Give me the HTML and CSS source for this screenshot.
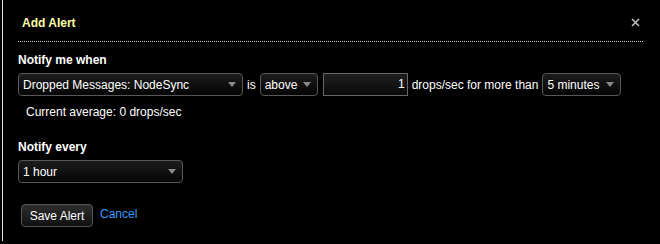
FILE: index.html
```html
<!DOCTYPE html>
<html>
<head>
    <link rel="stylesheet" href="styles.css">
</head>
<body>
    <div class="modal">
        <div class="modal-header">
            <h3 class="modal-title">Add Alert</h3>
            <span class="close">
                <svg width="9" height="9" viewBox="0 0 9 9"><path d="M1 1L8 8M8 1L1 8" stroke="#bbb" stroke-width="1.6"/></svg>
            </span>
        </div>
        <div class="modal-body">
            <div class="label">Notify me when</div>
            <div class="row">
                <div class="select select-metric">
                    <span>Dropped Messages: NodeSync</span>
                    <svg class="caret" width="8" height="5" viewBox="0 0 8 5"><path d="M0 0H8L4 5Z" fill="#8a8a8a"/></svg>
                </div>
                <span>is</span>
                <div class="select select-op">
                    <span>above</span>
                    <svg class="caret" width="8" height="5" viewBox="0 0 8 5"><path d="M0 0H8L4 5Z" fill="#8a8a8a"/></svg>
                </div>
                <div class="input">1</div>
                <span>drops/sec for more than</span>
                <div class="select select-time">
                    <span>5 minutes</span>
                    <svg class="caret" width="8" height="5" viewBox="0 0 8 5"><path d="M0 0H8L4 5Z" fill="#8a8a8a"/></svg>
                </div>
            </div>
            <div class="hint">Current average: 0 drops/sec</div>

            <div class="label label-every">Notify every</div>
            <div class="row">
                <div class="select select-every">
                    <span>1 hour</span>
                    <svg class="caret" width="8" height="5" viewBox="0 0 8 5"><path d="M0 0H8L4 5Z" fill="#8a8a8a"/></svg>
                </div>
            </div>

            <div class="actions">
                <button class="btn">Save Alert</button>
                <a class="cancel" href="#">Cancel</a>
            </div>
        </div>
    </div>
</body>
</html>
```

FILE: styles.css
```css
body {
    margin: 0;
    background-color: #000;
    color: #fff;
    font-family: "Liberation Sans", Arial, sans-serif;
    font-size: 12px;
}
.modal {
    margin-left: 2px;
    height: 241px;
    border-left: 1px solid #e0e0e0;
    padding: 0 17px 0 15px;
    box-sizing: border-box;
}
.modal-header {
    height: 42px;
    border-bottom: 1px dotted #cfcfcf;
    box-sizing: border-box;
    display: flex;
    align-items: center;
    justify-content: space-between;
    padding: 4px 3px 0 4px;
}
.modal-title {
    margin: 0;
    font-size: 12px;
    font-weight: bold;
    color: #ffffa8;
}
.close {
    display: flex;
    margin-top: -1px;
}
.label {
    margin-top: 11px;
    font-weight: bold;
    line-height: 14px;
}
.label-every {
    margin-top: 21px;
}
.row {
    margin-top: 6px;
    display: flex;
    align-items: center;
    gap: 4px;
}
.select {
    height: 23px;
    box-sizing: border-box;
    border: 1px solid #585858;
    border-radius: 4px;
    background: linear-gradient(#1c1c1c, #050505);
    display: flex;
    align-items: center;
    justify-content: space-between;
    padding: 0 6px 0 4px;
}
.select-metric {
    width: 225px;
}
.select-op {
    width: 58px;
}
.select-time {
    width: 79px;
}
.select-every {
    width: 165px;
}
.caret {
    display: block;
}
.input {
    width: 85px;
    height: 23px;
    box-sizing: border-box;
    border: 1px solid #666;
    background: linear-gradient(#1e1e1e, #0a0a0a);
    text-align: right;
    line-height: 21px;
    padding-right: 2px;
    margin-left: 1px;
}
.hint {
    margin-top: 9px;
    margin-left: 8px;
    line-height: 14px;
}
.actions {
    margin-top: 21px;
    margin-left: 3px;
    display: flex;
    align-items: center;
    gap: 7px;
}
.btn {
    height: 23px;
    width: 72px;
    padding: 0;
    font-family: inherit;
    font-size: 12px;
    color: #fff;
    background: linear-gradient(#2e2e2e, #111);
    border: 1px solid #555;
    border-radius: 4px;
}
.cancel {
    color: #3a9cff;
    text-decoration: none;
    margin-top: -4px;
}
```
